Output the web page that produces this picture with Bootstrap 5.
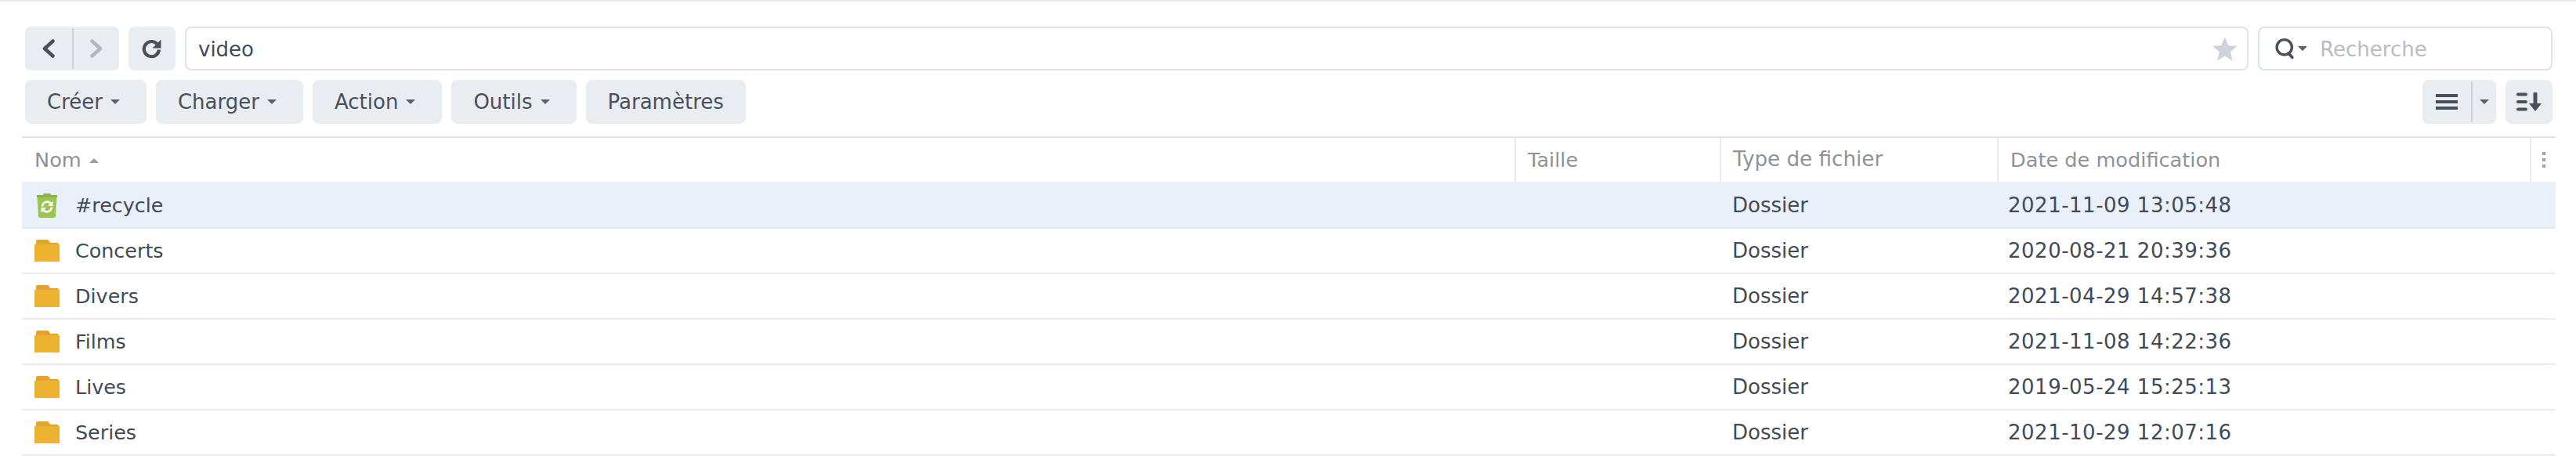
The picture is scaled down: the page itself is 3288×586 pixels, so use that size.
<!DOCTYPE html>
<html lang="fr"><head><meta charset="utf-8">
<link href="https://cdn.jsdelivr.net/npm/bootstrap@5.3.0/dist/css/bootstrap.min.css" rel="stylesheet">
<style>
html,body{background:#fff;height:586px;overflow:hidden}
body{font-family:"DejaVu Sans",sans-serif;font-size:26px;color:#414b55;border-top:2px solid #e3e7ee}
.fs-bar{margin:0 30px 0 32px;height:56px;gap:12px}
.fs-bar1{margin-top:32px;margin-bottom:12px}
.fs-btn{--bs-btn-bg:#e9ecf1;--bs-btn-border-color:#e9ecf1;--bs-btn-color:#4a5059;--bs-btn-hover-bg:#e0e4ea;--bs-btn-hover-border-color:#e0e4ea;--bs-btn-hover-color:#4a5059;--bs-btn-border-radius:8px;--bs-btn-font-size:26px;--bs-btn-line-height:1;--bs-btn-padding-x:28px;--bs-btn-padding-y:0;--bs-btn-border-width:0;height:56px;display:inline-flex;align-items:center;justify-content:center;letter-spacing:0}
.fs-btn.dropdown-toggle{padding-left:28px;padding-right:34px}
.fs-btn.dropdown-toggle::after{margin-left:10px;border-top:6px solid #5a6068;border-right:6px solid transparent;border-left:6px solid transparent;border-bottom:0;vertical-align:middle}
.fs-icon{width:60px;padding:0}
.fs-nav{width:60px;padding:0}
.fs-nav2{width:58px}
.fs-div{width:2px;height:52px;background:#cdd3dc;align-self:center}
.fs-group{border-radius:8px;overflow:hidden;background:#e9ecf1}
.fs-group .fs-btn{border-radius:0}
.fs-addr{border:2px solid #dde3ec;border-radius:8px;height:56px;padding:0 12px 0 15px;background:#fff}
.fs-addr .form-control{border:0;padding:1px 0 0;font-size:26px;color:#414b55;box-shadow:none;background:transparent;font-family:inherit;height:50px}
.fs-search{width:376px;flex:none;padding:0 0 0 20px;gap:4px}
.fs-search .form-control::placeholder{color:#b9bdc3;opacity:1}
.fs-search .form-control{margin-left:12px;min-width:0}
.fs-caret{width:0;height:0;border-top:6px solid #5a6068;border-left:6px solid transparent;border-right:6px solid transparent;flex:none}
.fs-list{width:94px}
.fs-list .fs-a{width:62px;padding:0}
.fs-list .fs-b{width:30px;padding:0}
.fs-wrap{margin:16px 26px 0 28px;border-top:2px solid #dde3ec}
.fs-table{table-layout:fixed;width:3234px;margin:0;--bs-table-bg:transparent;--bs-table-color:#414b55;border-collapse:separate;border-spacing:0}
.fs-table th,.fs-table td{padding:0 0 0 14px;vertical-align:middle;white-space:nowrap;font-weight:400;font-size:26px;box-shadow:none}
.fs-table th{height:56px;color:#8e9298;border-bottom:0;border-left:2px solid #e8ecf1;padding-left:15px;font-size:25.600px}
.fs-table th:first-child{border-left:0;padding-left:16px}
.fs-table th:nth-child(3){font-size:26.200px}
.fs-table td{height:58px;border-bottom:2px solid #e8ecf1;line-height:1}
.fs-table td:nth-child(3){padding-left:16px}
.fs-table tr.fs-sel td{height:60px;background:#e9f0fa;border-top:2px solid #e9f0fa;border-bottom-color:#e3e8f0}
.fs-date{letter-spacing:.5px}
.fs-name{display:flex;align-items:center}
.fs-ico{width:52px;flex:none;display:flex;margin-left:2px}
.fs-namet{font-size:25.400px;padding-top:2px}
.fs-sort{width:0;height:0;display:inline-block;border-bottom:6px solid #9a9ea4;border-left:6px solid transparent;border-right:6px solid transparent;margin-left:10px;vertical-align:5px}
.fs-c1{width:1905px}.fs-c2{width:262px}.fs-c3{width:354px}.fs-c4{width:680px}.fs-c5{width:33px}
</style></head><body>

<div class="d-flex align-items-center fs-bar fs-bar1">
  <div class="d-flex fs-group flex-none">
    <button class="btn fs-btn fs-nav" type="button" aria-label="Précédent"><svg width="16" height="24" viewBox="0 0 16 24"><path d="M13.500 2.500 3 12l10.500 9.500" fill="none" stroke="#4a5059" stroke-width="4.500" stroke-linecap="round" stroke-linejoin="round"/></svg></button>
    <span class="fs-div"></span>
    <button class="btn fs-btn fs-nav fs-nav2" type="button" aria-label="Suivant"><svg width="16" height="24" viewBox="0 0 16 24"><path d="M2.500 2.500 13 12 2.500 21.500" fill="none" stroke="#b4b8bd" stroke-width="4.500" stroke-linecap="round" stroke-linejoin="round"/></svg></button>
  </div>
  <button class="btn fs-btn fs-icon" type="button" aria-label="Actualiser"><svg width="26" height="26" viewBox="0 0 26 26"><path d="M19.600 7.200A9.600 9.600 0 1 0 22 14.500" fill="none" stroke="#4a5059" stroke-width="4.200"/><path d="M24.500 1.500v11h-11z" fill="#4a5059"/></svg></button>
  <div class="fs-addr d-flex align-items-center flex-grow-1">
    <input class="form-control" type="text" value="video" aria-label="Chemin">
    <svg class="flex-none" width="32" height="31" viewBox="0 0 32 31"><path d="M16 0l4.600 11.200 11.400.6-8.800 7.600L26 31l-10-6.500L6 31l2.800-11.600L0 11.800l11.400-.6z" fill="#cdd3dc"/></svg>
  </div>
  <div class="fs-addr fs-search d-flex align-items-center">
    <svg class="flex-none" width="30" height="30" viewBox="0 0 30 30"><circle cx="14" cy="13" r="11.500" fill="none" stroke="#4a5059" stroke-width="4"/><path d="M20 22l6 6.500" stroke="#4a5059" stroke-width="4.400" stroke-linecap="round"/></svg>
    <span class="fs-caret"></span>
    <input class="form-control" type="text" placeholder="Recherche" aria-label="Recherche">
  </div>
</div>

<div class="d-flex align-items-center fs-bar">
  <button class="btn fs-btn dropdown-toggle" type="button">Créer</button>
  <button class="btn fs-btn dropdown-toggle" type="button">Charger</button>
  <button class="btn fs-btn dropdown-toggle" type="button">Action</button>
  <button class="btn fs-btn dropdown-toggle" type="button">Outils</button>
  <button class="btn fs-btn" type="button">Paramètres</button>
  <div class="d-flex fs-group fs-list ms-auto">
    <button class="btn fs-btn fs-a" type="button" aria-label="Liste"><svg width="28" height="20" viewBox="0 0 28 20"><path d="M0 0h28v4H0zM0 8h28v4H0zM0 16h28v4H0z" fill="#4a5059"/></svg></button>
    <span class="fs-div"></span>
    <button class="btn fs-btn fs-b" type="button" aria-label="Vue"><span class="fs-caret"></span></button>
  </div>
  <button class="btn fs-btn fs-icon" type="button" aria-label="Trier"><svg width="32" height="24" viewBox="0 0 32 24"><g fill="none" stroke="#4a5059" stroke-width="4" stroke-linecap="round"><path d="M2 2.500h10M2 12h10M2 21.500h10"/></g><path d="M22.500 0h3a1 1 0 0 1 1 1v13H32l-8 10-8-10h5.500V1a1 1 0 0 1 1-1z" fill="#4a5059"/></svg></button>
</div>

<div class="fs-wrap">
<table class="table fs-table mb-0">
  <colgroup><col class="fs-c1"><col class="fs-c2"><col class="fs-c3"><col class="fs-c4"><col class="fs-c5"></colgroup>
  <thead><tr>
    <th>Nom<span class="fs-sort"></span></th><th>Taille</th><th>Type de fichier</th><th>Date de modification</th>
    <th class="p-0"><svg class="d-block mx-auto" width="4" height="20" viewBox="0 0 4 20"><path d="M0 0h4v4H0zM0 8h4v4H0zM0 16h4v4H0z" fill="#9c9ea3"/></svg></th>
  </tr></thead>
  <tbody>
    <tr class="fs-sel"><td><div class="fs-name"><span class="fs-ico"><svg width="32" height="32" viewBox="0 0 32 32"><path d="M11.500 1h9v3h-9z" fill="#8bb342"/><path d="M3 3h26v3H3z" fill="#8bb342"/><path d="M3.500 6h25l-1.500 24a2 2 0 0 1-2 2H7a2 2 0 0 1-2-2z" fill="#9cc452"/><g fill="none" stroke="#fff" stroke-width="2.600"><path d="M10 17.500a6.200 6.200 0 0 1 10.500-4"/><path d="M22 18.500a6.200 6.200 0 0 1-10.500 4"/></g><path d="M23.500 10.500v6.500h-6.500zM8.500 25.500V19h6.500z" fill="#fff"/></svg></span><span class="fs-namet">#recycle</span></div></td><td></td><td>Dossier</td><td class="fs-date">2021-11-09 13:05:48</td><td></td></tr>
    <tr><td><div class="fs-name"><span class="fs-ico"><svg width="32" height="28" viewBox="0 0 32 28"><path d="M2 2a2 2 0 0 1 2-2h12a4 4 0 0 1 3 2l1 2h10l1 3H2z" fill="#e8a030"/><path d="M0 6h32v22H0z" fill="#edb22f"/></svg></span><span class="fs-namet">Concerts</span></div></td><td></td><td>Dossier</td><td class="fs-date">2020-08-21 20:39:36</td><td></td></tr>
    <tr><td><div class="fs-name"><span class="fs-ico"><svg width="32" height="28" viewBox="0 0 32 28"><path d="M2 2a2 2 0 0 1 2-2h12a4 4 0 0 1 3 2l1 2h10l1 3H2z" fill="#e8a030"/><path d="M0 6h32v22H0z" fill="#edb22f"/></svg></span><span class="fs-namet">Divers</span></div></td><td></td><td>Dossier</td><td class="fs-date">2021-04-29 14:57:38</td><td></td></tr>
    <tr><td><div class="fs-name"><span class="fs-ico"><svg width="32" height="28" viewBox="0 0 32 28"><path d="M2 2a2 2 0 0 1 2-2h12a4 4 0 0 1 3 2l1 2h10l1 3H2z" fill="#e8a030"/><path d="M0 6h32v22H0z" fill="#edb22f"/></svg></span><span class="fs-namet">Films</span></div></td><td></td><td>Dossier</td><td class="fs-date">2021-11-08 14:22:36</td><td></td></tr>
    <tr><td><div class="fs-name"><span class="fs-ico"><svg width="32" height="28" viewBox="0 0 32 28"><path d="M2 2a2 2 0 0 1 2-2h12a4 4 0 0 1 3 2l1 2h10l1 3H2z" fill="#e8a030"/><path d="M0 6h32v22H0z" fill="#edb22f"/></svg></span><span class="fs-namet">Lives</span></div></td><td></td><td>Dossier</td><td class="fs-date">2019-05-24 15:25:13</td><td></td></tr>
    <tr><td><div class="fs-name"><span class="fs-ico"><svg width="32" height="28" viewBox="0 0 32 28"><path d="M2 2a2 2 0 0 1 2-2h12a4 4 0 0 1 3 2l1 2h10l1 3H2z" fill="#e8a030"/><path d="M0 6h32v22H0z" fill="#edb22f"/></svg></span><span class="fs-namet">Series</span></div></td><td></td><td>Dossier</td><td class="fs-date">2021-10-29 12:07:16</td><td></td></tr>
  </tbody>
</table>
</div>
<script src="https://cdn.jsdelivr.net/npm/bootstrap@5.3.0/dist/js/bootstrap.bundle.min.js"></script>
</body></html>
